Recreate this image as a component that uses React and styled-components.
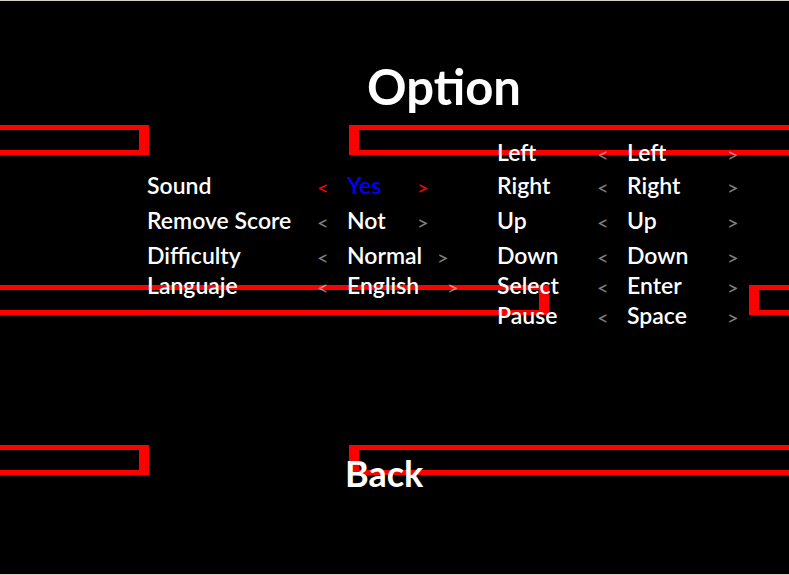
import React from "react";
import styled, { createGlobalStyle } from "styled-components";

const GlobalStyle = createGlobalStyle`
  *, *::before, *::after { box-sizing: border-box; }
  body {
    margin: 0;
    background: #000;
    color: #fff;
    font-family: Lato, "Open Sans", sans-serif;
  }
`;

const Screen = styled.main`
  position: relative;
  isolation: isolate;
  display: flex;
  flex-direction: column;
  min-height: 100vh;
  border-top: 1px solid #d4d0c8;
  border-bottom: 1px solid #d4d0c8;
  background: #000;
  overflow: hidden;
`;

const Backdrop = styled.div`
  position: absolute;
  inset: 0;
  z-index: -1;
  display: flex;
  flex-direction: column;
  gap: 130px;
  padding-top: 124px;
`;

const PlatformRow = styled.div`
  display: flex;
  gap: 200px;
  height: 30px;
`;

const Platform = styled.div`
  flex: ${(p) => (p.$length ? `0 0 ${p.$length}px` : "1")};
  border: solid #f00;
  border-width: ${(p) => (p.$length ? "5px 10px 5px 0" : "5px 0 5px 10px")};
`;

const Title = styled.h1`
  margin: 0;
  padding: 55px 0 0 367px;
  font-size: 49px;
  line-height: 60px;
  font-weight: 700;
`;

const Settings = styled.div`
  display: flex;
  align-items: flex-start;
  padding: 21px 0 0 147px;
`;

const Panel = styled.section`
  display: grid;
  grid-template-rows: 33px 35px 35px 30px 30px 30px;
  flex: 0 0 ${(p) => p.$width}px;
`;

const Option = styled.div`
  display: flex;
  align-items: center;
  grid-row: ${(p) => p.$row};
  height: 30px;
  font-size: 23px;
  line-height: 30px;
  font-weight: 600;
  white-space: nowrap;
`;

const Name = styled.span`
  flex: 0 0 ${(p) => p.$width}px;
`;

const Value = styled.output`
  flex: 0 0 ${(p) => p.$width}px;
  color: ${(p) => (p.$active ? "#00f" : "inherit")};
`;

const Arrow = styled.button`
  flex: 0 0 ${(p) => p.$width}px;
  padding: 4px 0 0;
  border: 0;
  background: none;
  color: ${(p) => (p.$active ? "#f00" : "rgba(255, 255, 255, 0.5)")};
  font: 500 20px/26px Lato, sans-serif;
  text-align: left;
  cursor: pointer;
`;

const BackButton = styled.button`
  align-self: flex-start;
  margin: 121px 0 0 345px;
  padding: 0;
  border: 0;
  background: none;
  color: #fff;
  font: 700 36px/44px Lato, sans-serif;
  cursor: pointer;
`;

const general = [
  { name: "Sound", value: "Yes", width: 70, active: true },
  { name: "Remove Score", value: "Not", width: 70 },
  { name: "Difficulty", value: "Normal", width: 90 },
  { name: "Languaje", value: "English", width: 100 },
];

const keys = [
  { name: "Left", value: "Left", width: 100 },
  { name: "Right", value: "Right", width: 100 },
  { name: "Up", value: "Up", width: 100 },
  { name: "Down", value: "Down", width: 100 },
  { name: "Select", value: "Enter", width: 100 },
  { name: "Pause", value: "Space", width: 100 },
];

function OptionPanel({ label, options, firstRow, width, nameWidth }) {
  return (
    <Panel aria-label={label} $width={width}>
      {options.map((o, i) => (
        <Option key={o.name} $row={firstRow + i} role="group" aria-label={o.name}>
          <Name $width={nameWidth}>{o.name}</Name>
          <Arrow $width={30} $active={o.active} aria-label={`Previous ${o.name}`}>&lt;</Arrow>
          <Value $width={o.width} $active={o.active}>{o.value}</Value>
          <Arrow $width={20} $active={o.active} aria-label={`Next ${o.name}`}>&gt;</Arrow>
        </Option>
      ))}
    </Panel>
  );
}

export default function App() {
  return (
    <>
      <GlobalStyle />
      <Screen>
        <Backdrop aria-hidden="true">
          {[149, 549, 149].map((length, i) => (
            <PlatformRow key={i}>
              <Platform $length={length} />
              <Platform />
            </PlatformRow>
          ))}
        </Backdrop>
        <Title>Option</Title>
        <Settings>
          <OptionPanel label="General" options={general} firstRow={2} width={350} nameWidth={170} />
          <OptionPanel label="Keys" options={keys} firstRow={1} width={250} nameWidth={100} />
        </Settings>
        <BackButton>Back</BackButton>
      </Screen>
    </>
  );
}
